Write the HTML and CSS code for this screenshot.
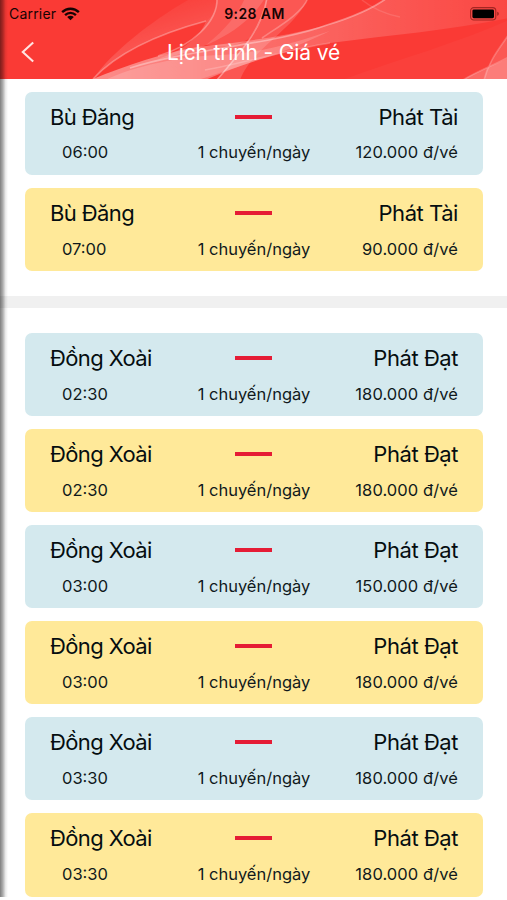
FILE: index.html
```html
<!DOCTYPE html>
<html lang="vi">
<head>
    <meta charset="UTF-8">
    <meta name="viewport" content="width=device-width, initial-scale=1.0">
    <title>Lịch trình - Giá vé</title>
    <link rel="stylesheet" href="styles.css">
</head>
<body>
    <div class="screen">
        <header class="header">
            <svg class="header-bg" viewBox="0 0 507 79" preserveAspectRatio="none">
                <defs>
                    <linearGradient id="glow" x1="0" y1="0" x2="0.45" y2="1">
                        <stop offset="0.1" stop-color="#fff" stop-opacity="0"/>
                        <stop offset="1" stop-color="#fff" stop-opacity="0.22"/>
                    </linearGradient>
                    <linearGradient id="band" x1="0" y1="0" x2="1" y2="0">
                        <stop offset="0" stop-color="#fff" stop-opacity="0.42"/>
                        <stop offset="0.4" stop-color="#fff" stop-opacity="0.26"/>
                        <stop offset="0.75" stop-color="#fff" stop-opacity="0.14"/>
                        <stop offset="1" stop-color="#fff" stop-opacity="0.07"/>
                    </linearGradient>
                    <filter id="soft" x="-5%" y="-10%" width="110%" height="120%">
                        <feGaussianBlur stdDeviation="0.7"/>
                    </filter>
                </defs>
                <g filter="url(#soft)">
                    <path d="M93 79C112 52 150 22 188 0H217C217 10 213 16 206 21C165 32 120 50 93 79Z" fill="url(#glow)"/>
                    <path d="M93 79C125 66 165 52 198 47C240 42 285 37 327 25C350 18 372 9 387 -2H509V18C445 31 390 35 330 43C280 51 240 65 205 80H93Z" fill="url(#band)"/>
                    <path d="M105 80C135 66 180 56 222 55C262 53 300 41 330 31C285 53 245 64 198 80Z" fill="#fff" opacity="0.17"/>
                    <path d="M217 -2C217 10 213 16 206 21C200 38 180 52 158 59C205 51 246 30 265 -2Z" fill="#fff" opacity="0.15"/>
                    <path d="M245 -2C238 14 226 29 206 45C227 48 240 45 250 38C258 24 266 12 267 -2Z" fill="#fff" opacity="0.12"/>
                    <path d="M267 -2C263 28 243 48 216 80H240C252 48 296 28 308 -2Z" fill="#fff" opacity="0.15"/>
                    <path d="M342 80C400 59 460 42 509 20V80Z" fill="#fff" opacity="0.03"/>
                    <path d="M463 80C476 72 492 66 509 58V80Z" fill="#fff" opacity="0.22"/>
                    <path d="M484 80C489 60 500 48 509 34V80Z" fill="#fff" opacity="0.13"/>
                    <g fill="none" stroke="#fff" stroke-width="1.6">
                        <path d="M93 79C120 50 165 32 206 21" opacity="0.3"/>
                        <path d="M217 -2C218 22 192 46 158 56" opacity="0.3"/>
                        <path d="M267 -2C262 28 244 48 217 80" opacity="0.35"/>
                        <path d="M308 -2C302 14 276 28 262 38" opacity="0.25"/>
                        <path d="M130 68C185 50 280 43 327 25C350 18 372 9 387 -2" opacity="0.35"/>
                        <path d="M205 70C250 62 290 49 330 43" opacity="0.2"/>
                        <path d="M362 0C372 8 385 14 400 17" opacity="0.12"/>
                        <path d="M463 80C478 71 494 65 509 57M484 80C489 60 500 48 509 34" opacity="0.22"/>
                    </g>
                </g>
            </svg>
            <div class="status-bar">
                <div class="carrier">
                    <span>Carrier</span>
                    <svg class="wifi" width="19" height="14" viewBox="0 0 20 14">
                        <g fill="none" stroke="#160303" stroke-width="2.5">
                            <path d="M1.2 5.1C6.2 0.2 13.8 0.2 18.8 5.1"/>
                            <path d="M4.3 8.2C7.5 5.1 12.5 5.1 15.7 8.2"/>
                        </g>
                        <path d="M6.5 10.2C8.5 8.4 11.5 8.4 13.5 10.2L10 13.7Z" fill="#160303"/>
                    </svg>
                </div>
                <span class="clock">9:28 AM</span>
                <svg class="battery" width="30" height="14" viewBox="0 0 30 14">
                    <rect x="0.6" y="0.6" width="25.2" height="12.4" rx="3.2" fill="none" stroke="#a52622" stroke-width="1.1"/>
                    <rect x="2.4" y="2.4" width="21.6" height="8.8" rx="1.4" fill="#000"/>
                    <path d="M27.2 4.8C29.4 5.5 29.4 8.1 27.2 8.8Z" fill="#a52622"/>
                </svg>
            </div>
            <div class="nav-bar">
                <svg class="back" width="14" height="22" viewBox="0 0 14 22">
                    <path d="M12.2 1.4L1.8 11L12.2 20.6" fill="none" stroke="#ffe3e1" stroke-width="2.1"/>
                </svg>
                <h1>Lịch trình - Giá vé</h1>
            </div>
        </header>

        <section class="group">
            <div class="ticket blue">
                <span class="from">Bù Đăng</span><i class="dash"></i><span class="company">Phát Tài</span>
                <span class="time">06:00</span><span class="trips">1 chuyến/ngày</span><span class="price">120.000 đ/vé</span>
            </div>
            <div class="ticket yellow">
                <span class="from">Bù Đăng</span><i class="dash"></i><span class="company">Phát Tài</span>
                <span class="time">07:00</span><span class="trips">1 chuyến/ngày</span><span class="price">90.000 đ/vé</span>
            </div>
        </section>

        <div class="divider"></div>

        <section class="group group-next">
            <div class="ticket blue">
                <span class="from">Đồng Xoài</span><i class="dash"></i><span class="company">Phát Đạt</span>
                <span class="time">02:30</span><span class="trips">1 chuyến/ngày</span><span class="price">180.000 đ/vé</span>
            </div>
            <div class="ticket yellow">
                <span class="from">Đồng Xoài</span><i class="dash"></i><span class="company">Phát Đạt</span>
                <span class="time">02:30</span><span class="trips">1 chuyến/ngày</span><span class="price">180.000 đ/vé</span>
            </div>
            <div class="ticket blue">
                <span class="from">Đồng Xoài</span><i class="dash"></i><span class="company">Phát Đạt</span>
                <span class="time">03:00</span><span class="trips">1 chuyến/ngày</span><span class="price">150.000 đ/vé</span>
            </div>
            <div class="ticket yellow">
                <span class="from">Đồng Xoài</span><i class="dash"></i><span class="company">Phát Đạt</span>
                <span class="time">03:00</span><span class="trips">1 chuyến/ngày</span><span class="price">180.000 đ/vé</span>
            </div>
            <div class="ticket blue">
                <span class="from">Đồng Xoài</span><i class="dash"></i><span class="company">Phát Đạt</span>
                <span class="time">03:30</span><span class="trips">1 chuyến/ngày</span><span class="price">180.000 đ/vé</span>
            </div>
            <div class="ticket yellow">
                <span class="from">Đồng Xoài</span><i class="dash"></i><span class="company">Phát Đạt</span>
                <span class="time">03:30</span><span class="trips">1 chuyến/ngày</span><span class="price">180.000 đ/vé</span>
            </div>
        </section>
        <div class="edge-shadow"></div>
    </div>
</body>
</html>
```
FILE: styles.css
```css
* {
    margin: 0;
    padding: 0;
    box-sizing: border-box;
}

body {
    background: #fff;
    font-family: Inter, "Noto Sans", sans-serif;
    color: #10191c;
    overflow: hidden;
}

.screen {
    position: relative;
    height: 900px;
    overflow: hidden;
}

.header {
    position: relative;
    height: 79px;
    background: #fa3a35;
}

.header-bg {
    position: absolute;
    inset: 0;
    width: 100%;
    height: 100%;
}

.status-bar {
    position: relative;
    display: grid;
    grid-template-columns: 1fr auto 1fr;
    align-items: center;
    height: 27px;
    padding: 0 7px 0 9px;
    color: #160303;
    font-size: 14px;
}

.carrier {
    display: flex;
    align-items: center;
    gap: 5px;
    letter-spacing: 0.2px;
}

.clock {
    font-weight: 600;
    letter-spacing: 0.4px;
}

.battery {
    justify-self: end;
}

.nav-bar {
    position: relative;
    display: grid;
    grid-template-columns: 60px 1fr 60px;
    align-items: center;
    height: 50px;
}

.back {
    margin-left: 21px;
}

h1 {
    color: #fff;
    font-size: 21px;
    font-weight: 400;
    text-align: center;
    letter-spacing: -0.15px;
    white-space: nowrap;
}

.group {
    display: flex;
    flex-direction: column;
    gap: 12.6px;
    padding: 12.5px 24.5px 24.5px 25.4px;
}

.ticket {
    display: grid;
    grid-template-columns: 1fr auto 1fr;
    grid-template-rows: 36px 34px;
    align-items: center;
    height: 83.5px;
    padding: 7.3px 24.5px 0 24.6px;
    border-radius: 7px;
    font-size: 16.5px;
    white-space: nowrap;
}

.blue {
    background: #d4e9ee;
}

.yellow {
    background: #ffe999;
}

.from,
.company {
    font-size: 22px;
    letter-spacing: -0.6px;
    color: #050d10;
}

.company {
    letter-spacing: -0.45px;
}

.company,
.price {
    justify-self: end;
}

.time,
.trips,
.price {
    padding-top: 1.4px;
}

.time {
    padding-left: 12px;
}

.price {
    letter-spacing: 0.08px;
}

.dash {
    justify-self: center;
    width: 37px;
    height: 4px;
    background: #e51c35;
}

.divider {
    height: 12.5px;
    background: #f0f0f0;
}

.group-next {
    padding-top: 24.5px;
}

/* shadow of the previous screen along the left edge */
.edge-shadow {
    position: absolute;
    left: 0;
    top: 0;
    width: 8px;
    height: 897px;
    background: linear-gradient(to right, rgba(0,0,0,0.5), rgba(0,0,0,0.32) 35%, rgba(0,0,0,0.08) 70%, transparent);
}
```
